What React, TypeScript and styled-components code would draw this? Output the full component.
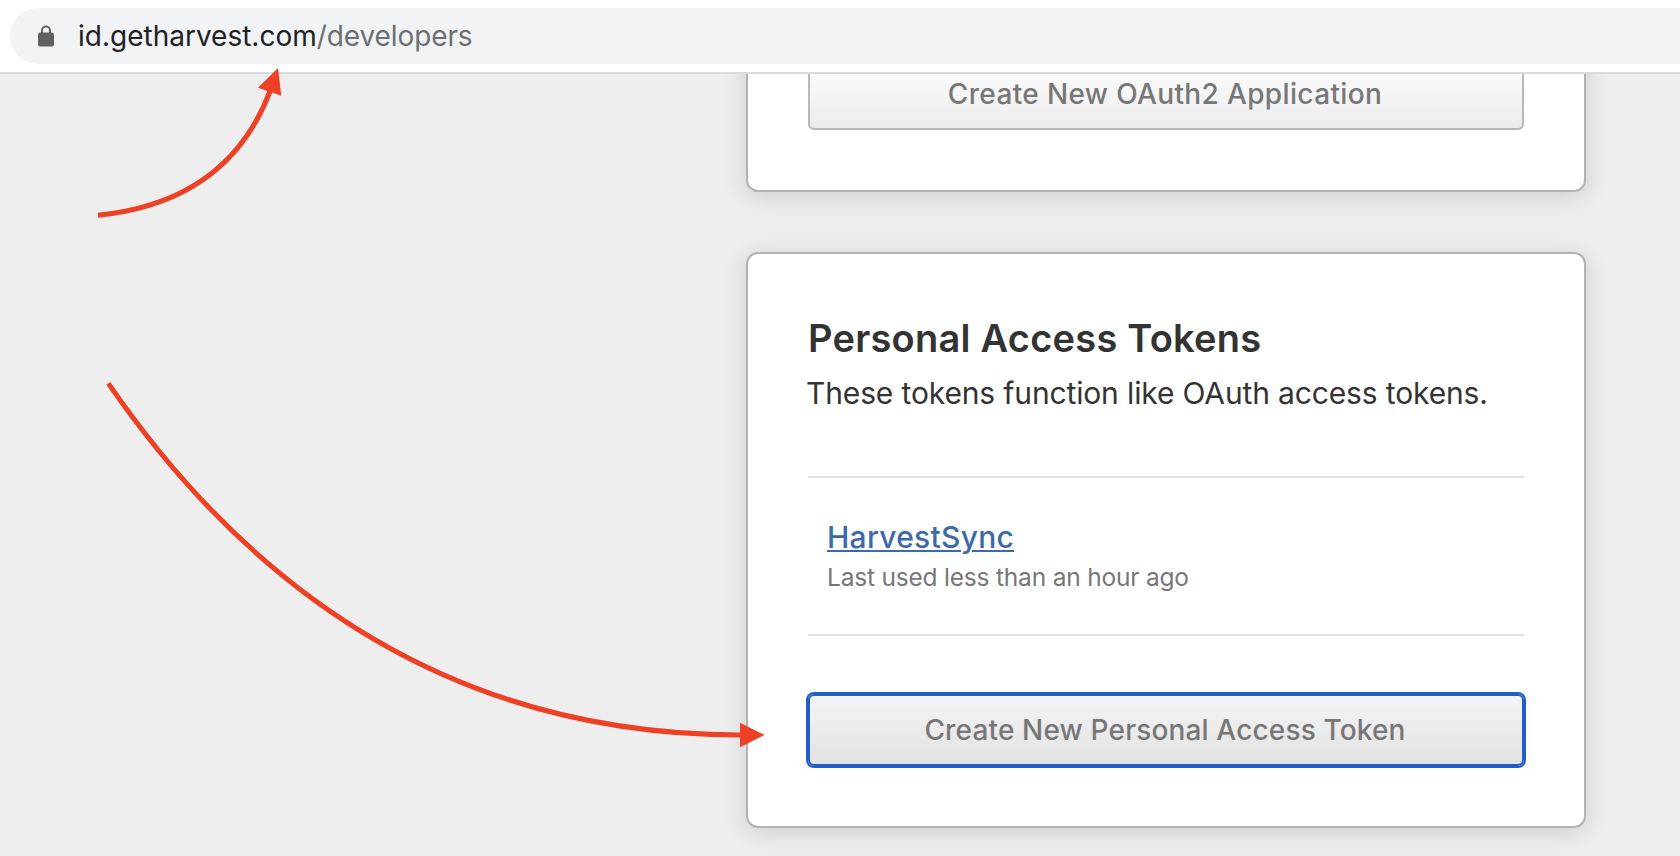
import React from "react";
import styled, { createGlobalStyle, css } from "styled-components";

const GlobalStyle = createGlobalStyle`
  *, *::before, *::after { box-sizing: border-box; }
  body {
    margin: 0;
    background: #eee;
    font-family: Inter, "Liberation Sans", sans-serif;
    -webkit-font-smoothing: antialiased;
  }
`;

const Window = styled.div`
  position: relative;
  display: flex;
  flex-direction: column;
  width: 1680px;
  height: 856px;
  overflow: hidden;
`;

const Toolbar = styled.header`
  flex: none;
  height: 74px;
  padding: 8px 0 8px 10px;
  background: #fff;
  border-bottom: 2px solid #dadae1;
`;

const AddressBar = styled.div`
  display: flex;
  align-items: center;
  gap: 24px;
  height: 56px;
  padding-left: 28px;
  background: #f1f3f4;
  border-radius: 28px 0 0 28px;
`;

const LockIcon = styled.svg`
  flex: none;
  width: 16px;
  height: 22px;
`;

const Url = styled.div`
  font-size: 28px;
  line-height: 40px;
  letter-spacing: -0.1px;
  color: #6d6f73;
  white-space: nowrap;
`;

const Host = styled.span`
  color: #202124;
  letter-spacing: 0;
`;

const Page = styled.main`
  flex: 1;
  min-height: 0;
  overflow: hidden;
  background: #eee;
`;

/* The page is scrolled, so the first card starts above the visible area. */
const CardColumn = styled.div`
  display: flex;
  flex-direction: column;
  gap: 60px;
  width: 840px;
  margin: -78px 0 0 746px;
`;

const Card = styled.section`
  display: flex;
  flex-direction: column;
  padding: 60px;
  background: #fff;
  border: 2px solid #b3b3b3;
  border-radius: 12px;
  box-shadow: 0 4px 24px rgba(0, 0, 0, 0.14);
`;

const Title = styled.h2`
  margin: 0;
  font-size: 38px;
  font-weight: 600;
  line-height: 48px;
  letter-spacing: 0.24px;
  color: #333;
`;

const Description = styled.p`
  margin: 9px 0 61px -2px;
  font-size: 30px;
  line-height: 44px;
  letter-spacing: -0.14px;
  color: #333;
`;

const TokenRow = styled.div`
  display: flex;
  flex-direction: column;
  align-items: flex-start;
  margin-bottom: 58px;
  padding: 39px 19px 41px;
  border-top: 2px solid #e3e3e3;
  border-bottom: 2px solid #e3e3e3;
`;

const TokenLink = styled.a`
  font-size: 30px;
  font-weight: 500;
  line-height: 40px;
  letter-spacing: 0.27px;
  color: #3e69a8;
  text-decoration: underline;
  text-decoration-thickness: 2px;
  text-underline-offset: 2px;
`;

const LastUsed = styled.span`
  margin-top: 4px;
  font-size: 24.5px;
  line-height: 32px;
  letter-spacing: -0.2px;
  color: #777;
`;

const CreateButton = styled.button<{ $tracking: number; $focused?: boolean }>`
  height: 72px;
  padding: 0 2px 0 0;
  font-family: inherit;
  font-size: 28px;
  font-weight: 500;
  letter-spacing: ${(p) => p.$tracking}px;
  color: #777;
  background: linear-gradient(#fff, #ebebeb) border-box;
  border: 2px solid #b8b8b8;
  border-radius: 6px;

  ${(p) =>
    p.$focused &&
    css`
      background: linear-gradient(#f5f5f5, #e1e1e1) border-box;
      border-color: #225ec6;
      box-shadow: 0 0 0 2px #225ec6;
    `}
`;

const Annotations = styled.svg`
  position: absolute;
  inset: 0;
  pointer-events: none;
`;

export default function App() {
  return (
    <Window>
      <GlobalStyle />
      <Toolbar>
        <AddressBar>
          <LockIcon viewBox="0 0 16 22">
            <path d="M4 9V5.5a4 4 0 0 1 8 0V9" fill="none" stroke="#5f6164" strokeWidth="2" />
            <rect y="7.5" width="16" height="14" rx="2" fill="#5f6164" />
          </LockIcon>
          <Url>
            <Host>id.getharvest.com</Host>/developers
          </Url>
        </AddressBar>
      </Toolbar>
      <Page>
        <CardColumn>
          <Card>
            <CreateButton $tracking={0.36}>Create New OAuth2 Application</CreateButton>
          </Card>
          <Card>
            <Title>Personal Access Tokens</Title>
            <Description>These tokens function like OAuth access tokens.</Description>
            <TokenRow>
              <TokenLink>HarvestSync</TokenLink>
              <LastUsed>Last used less than an hour ago</LastUsed>
            </TokenRow>
            <CreateButton $tracking={0.16} $focused>
              Create New Personal Access Token
            </CreateButton>
          </Card>
        </CardColumn>
      </Page>
      <Annotations width="1680" height="856" viewBox="0 0 1680 856">
        <g fill="none" stroke="#ee4024" strokeWidth="5">
          <path d="M98 215.3Q228.500 202 270.500 90" />
          <path d="M108.300 383.300Q351 735 741 735" />
        </g>
        <g fill="#ee4024">
          <path d="M278 68L258 87.700L281.300 95.700Z" />
          <path d="M764.500 735L740 722.700V747.300Z" />
        </g>
      </Annotations>
    </Window>
  );
}
